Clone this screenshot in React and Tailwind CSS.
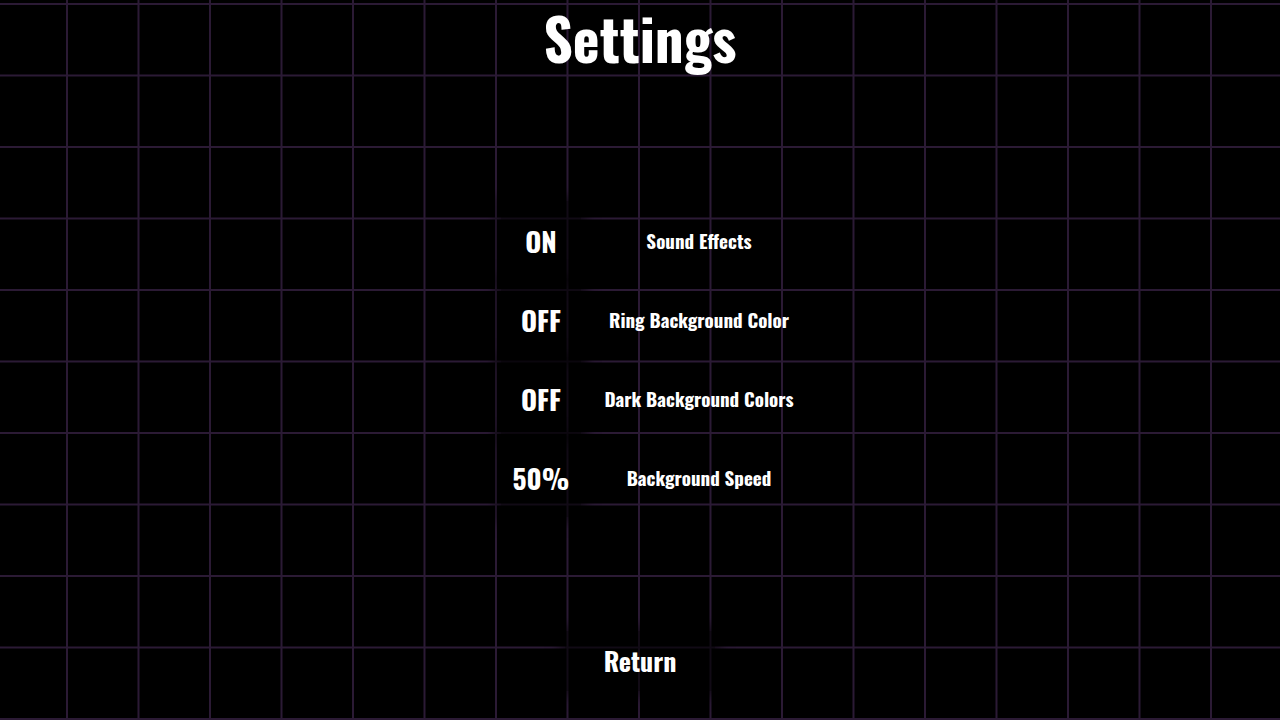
import React, { useState } from "react";

const FONT = { fontFamily: '"Oswald", "Liberation Sans Narrow", "DejaVu Sans Condensed", "Liberation Sans", sans-serif' };

const SETTINGS = [
  ["ON", "Sound Effects"],
  ["OFF", "Ring Background Color"],
  ["OFF", "Dark Background Colors"],
  ["50%", "Background Speed"],
];

const SettingRow = ({ value, label }) => (
  <div className="flex items-center h-[79px]">
    <button className="w-[80px] h-full flex items-center justify-center bg-black/60 shadow-[0_0_10px_6px_rgba(0,0,0,0.5)] text-white font-bold text-[27.5px] leading-none">
      {value}
    </button>
    <div className="w-[236px] text-center text-white font-bold text-[19px] leading-none">
      {label}
    </div>
  </div>
);

export default function App() {
  const [items] = useState(SETTINGS);

  return (
    <div
      className="w-[1280px] h-[720px] overflow-hidden bg-black bg-[linear-gradient(to_right,#2b1a35_2px,transparent_2px),linear-gradient(to_bottom,#2b1a35_2px,transparent_2px)] bg-[length:71.5px_71.5px] bg-[position:66px_3px] flex flex-col items-center"
      style={FONT}
    >
      {/* Title */}
      <h1 className="h-[74px] flex items-center text-white font-bold text-[57px] leading-[1.3]">
        Settings
      </h1>

      {/* Options */}
      <div className="mt-[127px] pl-[38px] flex flex-col">
        {items.map(([value, label], i) => (
          <SettingRow key={i} value={value} label={label} />
        ))}
      </div>

      {/* Return */}
      <button className="mt-[114px] w-[150px] h-[60px] flex items-center justify-center bg-black/60 shadow-[0_0_10px_6px_rgba(0,0,0,0.5)] text-white font-bold text-[26px] leading-none">
        Return
      </button>
    </div>
  );
}
